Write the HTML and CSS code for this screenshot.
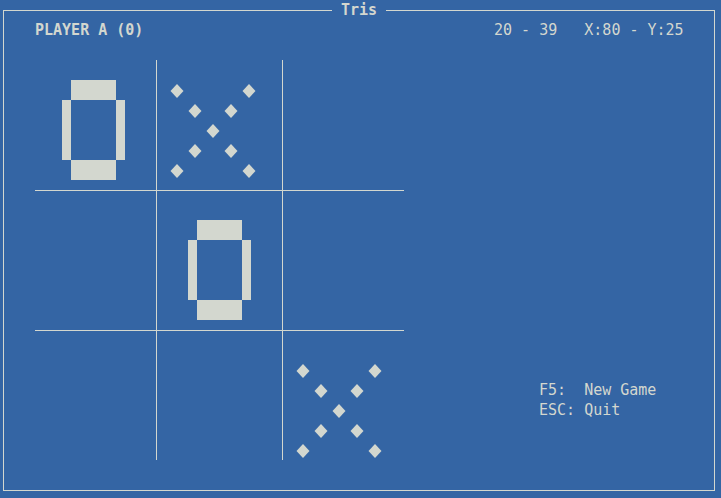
FILE: index.html
```html
<!DOCTYPE html>
<html>
<head>
<meta charset="utf-8">
<link rel="stylesheet" href="styles.css">
</head>
<body>
<div class="screen">
  <div class="frame"></div>
  <div class="title"> Tris </div>
  <div class="player">PLAYER A (0)</div>
  <div class="coords">20 - 39   X:80 - Y:25</div>

  <div class="board">
    <div class="cell c1 r1">
      <div class="piece-o"><i class="o-top"></i><i class="o-left"></i><i class="o-right"></i><i class="o-bottom"></i></div>
    </div>
    <div class="vline v1"></div>
    <div class="cell c2 r1">
      <div class="piece-x">
        <svg class="dm a1 b1" viewBox="0 0 14 14"><polygon points="7,0 13.5,7 7,14 0.5,7"/></svg>
        <svg class="dm a5 b1" viewBox="0 0 14 14"><polygon points="7,0 13.5,7 7,14 0.5,7"/></svg>
        <svg class="dm a2 b2" viewBox="0 0 14 14"><polygon points="7,0 13.5,7 7,14 0.5,7"/></svg>
        <svg class="dm a4 b2" viewBox="0 0 14 14"><polygon points="7,0 13.5,7 7,14 0.5,7"/></svg>
        <svg class="dm a3 b3" viewBox="0 0 14 14"><polygon points="7,0 13.5,7 7,14 0.5,7"/></svg>
        <svg class="dm a2 b4" viewBox="0 0 14 14"><polygon points="7,0 13.5,7 7,14 0.5,7"/></svg>
        <svg class="dm a4 b4" viewBox="0 0 14 14"><polygon points="7,0 13.5,7 7,14 0.5,7"/></svg>
        <svg class="dm a1 b5" viewBox="0 0 14 14"><polygon points="7,0 13.5,7 7,14 0.5,7"/></svg>
        <svg class="dm a5 b5" viewBox="0 0 14 14"><polygon points="7,0 13.5,7 7,14 0.5,7"/></svg>
      </div>
    </div>
    <div class="vline v2"></div>
    <div class="cell c3 r1"></div>

    <div class="hline h1"></div>

    <div class="cell c1 r2"></div>
    <div class="cell c2 r2">
      <div class="piece-o"><i class="o-top"></i><i class="o-left"></i><i class="o-right"></i><i class="o-bottom"></i></div>
    </div>
    <div class="cell c3 r2"></div>

    <div class="hline h2"></div>

    <div class="cell c1 r3"></div>
    <div class="cell c2 r3"></div>
    <div class="cell c3 r3">
      <div class="piece-x">
        <svg class="dm a1 b1" viewBox="0 0 14 14"><polygon points="7,0 13.5,7 7,14 0.5,7"/></svg>
        <svg class="dm a5 b1" viewBox="0 0 14 14"><polygon points="7,0 13.5,7 7,14 0.5,7"/></svg>
        <svg class="dm a2 b2" viewBox="0 0 14 14"><polygon points="7,0 13.5,7 7,14 0.5,7"/></svg>
        <svg class="dm a4 b2" viewBox="0 0 14 14"><polygon points="7,0 13.5,7 7,14 0.5,7"/></svg>
        <svg class="dm a3 b3" viewBox="0 0 14 14"><polygon points="7,0 13.5,7 7,14 0.5,7"/></svg>
        <svg class="dm a2 b4" viewBox="0 0 14 14"><polygon points="7,0 13.5,7 7,14 0.5,7"/></svg>
        <svg class="dm a4 b4" viewBox="0 0 14 14"><polygon points="7,0 13.5,7 7,14 0.5,7"/></svg>
        <svg class="dm a1 b5" viewBox="0 0 14 14"><polygon points="7,0 13.5,7 7,14 0.5,7"/></svg>
        <svg class="dm a5 b5" viewBox="0 0 14 14"><polygon points="7,0 13.5,7 7,14 0.5,7"/></svg>
      </div>
    </div>
  </div>

  <div class="help"><div class="help-line">F5:  New Game</div><div class="help-line">ESC: Quit</div></div>
</div>
</body>
</html>
```

FILE: styles.css
```css
html, body {
  margin: 0;
  padding: 0;
  background: #3465a4;
  overflow: hidden;
}

.screen {
  width: 720px;
  height: 498px;
  margin-left: -1px;
  display: grid;
  grid-template-columns: repeat(80, 9px);
  grid-template-rows: repeat(24, 20px) 18px;
  font-family: "DejaVu Sans Mono", "Liberation Mono", monospace;
  font-size: 15px;
  line-height: 20px;
  color: #d3d7cf;
}

.frame {
  grid-column: 1 / -1;
  grid-row: 1 / -1;
  margin: 10px 4px 7px 4px;
  border: 1px solid #d3d7cf;
}

.title {
  grid-column: 38 / 44;
  grid-row: 1;
  background: #3465a4;
  font-weight: bold;
  white-space: pre;
  z-index: 1;
}

.player {
  grid-column: 5 / span 12;
  grid-row: 2;
  font-weight: bold;
  white-space: pre;
}

.coords {
  grid-column: 56 / span 21;
  grid-row: 2;
  white-space: pre;
}

.help {
  grid-column: 61 / span 13;
  grid-row: 20 / span 2;
}
.help-line {
  white-space: pre;
}

/* Board */
.board {
  grid-column: 5 / span 41;
  grid-row: 4 / span 20;
  display: grid;
  grid-template-columns: 117px 9px 117px 9px 117px;
  grid-template-rows: 120px 20px 120px 20px 120px;
}

.cell {
  display: flex;
  align-items: flex-start;
  padding-top: 20px;
  box-sizing: border-box;
}
.c1 { grid-column: 1; }
.c2 { grid-column: 3; }
.c3 { grid-column: 5; }
.r1 { grid-row: 1; }
.r2 { grid-row: 3; }
.r3 { grid-row: 5; }

.vline {
  grid-row: 1 / -1;
  width: 1px;
  margin-left: 4px;
  background: #d3d7cf;
  z-index: 1;
}
.v1 { grid-column: 2; }
.v2 { grid-column: 4; }

.hline {
  grid-column: 1 / -1;
  height: 1px;
  margin-top: 10px;
  background: #d3d7cf;
}
.h1 { grid-row: 2; }
.h2 { grid-row: 4; }

/* O piece */
.piece-o {
  margin-left: 27px;
  display: grid;
  grid-template-columns: repeat(7, 9px);
  grid-template-rows: repeat(5, 20px);
}
.piece-o i {
  display: block;
  background: #d3d7cf;
}
.o-top { grid-column: 2 / 7; grid-row: 1; }
.o-bottom { grid-column: 2 / 7; grid-row: 5; }
.o-left { grid-column: 1; grid-row: 2 / 5; }
.o-right { grid-column: 7; grid-row: 2 / 5; }

/* X piece */
.piece-x {
  margin-left: 9px;
  display: grid;
  grid-template-columns: repeat(5, 18px);
  grid-template-rows: repeat(5, 20px);
}
.dm {
  width: 14px;
  height: 14px;
  margin-top: 4px;
  fill: #d3d7cf;
  display: block;
}
.a1 { grid-column: 1; }
.a2 { grid-column: 2; }
.a3 { grid-column: 3; }
.a4 { grid-column: 4; }
.a5 { grid-column: 5; }
.b1 { grid-row: 1; }
.b2 { grid-row: 2; }
.b3 { grid-row: 3; }
.b4 { grid-row: 4; }
.b5 { grid-row: 5; }
```
